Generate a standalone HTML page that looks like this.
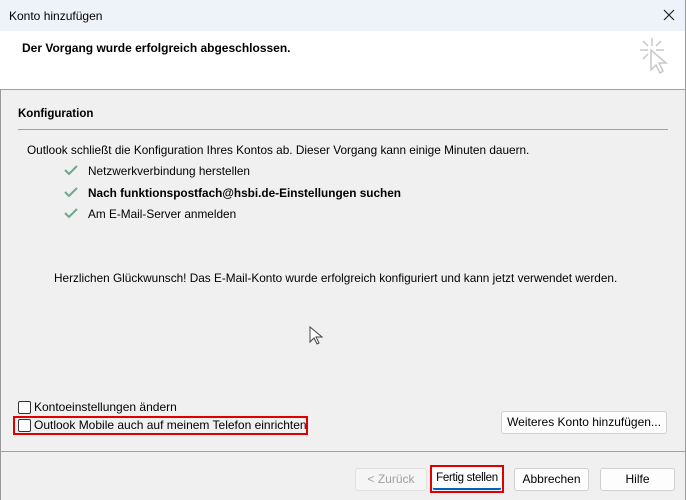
<html><head><style>
body{margin:0;width:686px;height:500px;overflow:hidden;background:#f0f0f0;font-family:"Liberation Sans","DejaVu Sans",sans-serif;font-size:12px;color:#000;position:relative}
.a{position:absolute;white-space:nowrap}
.btn{position:absolute;height:21px;border:1px solid #d0d0d0;border-radius:3px;background:#fdfdfd;text-align:center;line-height:21px;font-size:12px;white-space:nowrap}
.cb{position:absolute;width:11px;height:11px;border:1px solid #333;border-radius:2px;background:#fff}
.t{font-size:11.8px}
</style></head><body>
<div class="a" style="left:0;top:0;width:686px;height:31px;background:#eef2f9"></div>
<div class="a" style="left:9px;top:9px;font-size:12px">Konto hinzufügen</div>
<svg class="a" style="left:663px;top:9px" width="12" height="12"><path d="M1 1L11 11M11 1L1 11" stroke="#222" stroke-width="1.2"/></svg>
<div class="a" style="left:0;top:31px;width:686px;height:58px;background:#fff;border-bottom:1px solid #a0a0a0"></div>
<div class="a" style="left:22px;top:41px;font-weight:bold;font-size:12px">Der Vorgang wurde erfolgreich abgeschlossen.</div>
<svg class="a" style="left:636px;top:36px" width="40" height="50"><g stroke="#c8c8c8" stroke-width="1.5" fill="none"><path d="M16 2v8M4 14h8M20 14h8M7 5l5 5M25 5l-5 5M7 23l5-5"/><path d="M15 14l0 20 5-5 4 8 3-2-4-8 7 0z" fill="#fff"/></g></svg>
<div class="a" style="left:0;top:90px;width:1px;height:410px;background:#999"></div>
<div class="a" style="left:685px;top:0;width:1px;height:500px;background:#999"></div>
<div class="a" style="left:18px;top:108px;font-weight:bold;font-size:11.5px">Konfiguration</div>
<div class="a" style="left:18px;top:129px;width:650px;height:1px;background:#a0a0a0"></div>
<div class="a t" style="left:27px;top:143px">Outlook schließt die Konfiguration Ihres Kontos ab. Dieser Vorgang kann einige Minuten dauern.</div>
<svg class="a" style="left:64px;top:164px" width="14" height="12"><path d="M1 6l4 4 8-8" stroke="#6ea88c" stroke-width="2" fill="none"/></svg>
<svg class="a" style="left:64px;top:186px" width="14" height="12"><path d="M1 6l4 4 8-8" stroke="#6ea88c" stroke-width="2" fill="none"/></svg>
<svg class="a" style="left:64px;top:207px" width="14" height="12"><path d="M1 6l4 4 8-8" stroke="#6ea88c" stroke-width="2" fill="none"/></svg>
<div class="a t" style="left:88px;top:164px">Netzwerkverbindung herstellen</div>
<div class="a t" style="left:88px;top:186px;font-weight:bold">Nach funktionspostfach@hsbi.de-Einstellungen suchen</div>
<div class="a t" style="left:88px;top:207px">Am E-Mail-Server anmelden</div>
<div class="a t" style="left:54px;top:271px">Herzlichen Glückwunsch! Das E-Mail-Konto wurde erfolgreich konfiguriert und kann jetzt verwendet werden.</div>
<svg class="a" style="left:309px;top:326px" width="14" height="20"><path d="M1 1v15l4-4 3 6 2-1-3-6h6z" fill="#fff" stroke="#444"/></svg>
<div class="cb" style="left:18px;top:401px"></div>
<div class="a" style="left:34px;top:400px">Kontoeinstellungen ändern</div>
<div class="a" style="left:13px;top:416px;width:291px;height:15px;border:2px solid #e00000"></div>
<div class="cb" style="left:18px;top:419px"></div>
<div class="a" style="left:34px;top:418px">Outlook Mobile auch auf meinem Telefon einrichten</div>
<div class="btn" style="left:501px;top:411px;width:164px">Weiteres Konto hinzufügen...</div>
<div class="a" style="left:0;top:451px;width:686px;height:1px;background:#a0a0a0"></div>
<div class="btn" style="left:355px;top:468px;width:70px;color:#a0a0a0;border-color:#e0e0e0;background:#f5f5f5">&lt; Zurück</div>
<div class="a" style="left:430px;top:465px;width:70px;height:24px;border:2px solid #e00000"></div>
<div class="btn" style="left:432px;top:467px;width:68px;border-color:#fff;border-bottom:2px solid #0060c0;height:20px;letter-spacing:-0.3px;font-size:11.5px">Fertig stellen</div>
<div class="btn" style="left:514px;top:468px;width:73px">Abbrechen</div>
<div class="btn" style="left:600px;top:468px;width:73px">Hilfe</div>
</body></html>
